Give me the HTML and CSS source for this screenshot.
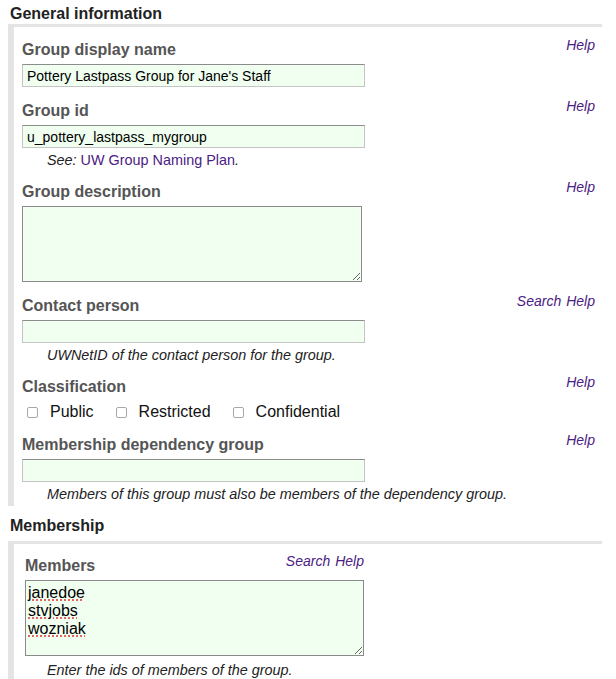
FILE: index.html
```html
<!DOCTYPE html>
<html lang="en">
<head>
<meta charset="utf-8">
<title>Group settings</title>
<link rel="stylesheet" href="styles.css">
</head>
<body>
<h2 class="section-title">General information</h2>
<div class="section">
  <div class="field">
    <div class="field-head"><span class="label">Group display name</span><span class="links"><a href="#">Help</a></span></div>
    <input class="text" type="text" value="Pottery Lastpass Group for Jane's Staff">
  </div>
  <div class="field">
    <div class="field-head"><span class="label">Group id</span><span class="links"><a href="#">Help</a></span></div>
    <input class="text" type="text" value="u_pottery_lastpass_mygroup">
    <div class="note">See: <a href="#">UW Group Naming Plan</a>.</div>
  </div>
  <div class="field">
    <div class="field-head"><span class="label">Group description</span><span class="links"><a href="#">Help</a></span></div>
    <textarea class="area desc"></textarea>
  </div>
  <div class="field">
    <div class="field-head"><span class="label">Contact person</span><span class="links"><a href="#">Search</a><a href="#">Help</a></span></div>
    <input class="text" type="text" value="">
    <div class="note">UWNetID of the contact person for the group.</div>
  </div>
  <div class="field">
    <div class="field-head"><span class="label">Classification</span><span class="links"><a href="#">Help</a></span></div>
    <div class="checks">
      <label class="check"><input type="checkbox"><span>Public</span></label>
      <label class="check"><input type="checkbox"><span>Restricted</span></label>
      <label class="check"><input type="checkbox"><span>Confidential</span></label>
    </div>
  </div>
  <div class="field last">
    <div class="field-head"><span class="label">Membership dependency group</span><span class="links"><a href="#">Help</a></span></div>
    <input class="text" type="text" value="">
    <div class="note">Members of this group must also be members of the dependency group.</div>
  </div>
</div>
<h2 class="section-title second">Membership</h2>
<div class="section membership">
  <div class="field members">
    <div class="field-head"><span class="label">Members</span><span class="links"><a href="#">Search</a><a href="#">Help</a></span></div>
    <textarea class="area mem" spellcheck="true">janedoe
stvjobs
wozniak</textarea>
    <div class="note">Enter the ids of members of the group.</div>
  </div>
</div>
</body>
</html>
```
FILE: styles.css
```css
html, body {
  background: #fff;
}
body {
  margin: 5px 8px 0 8px;
  font-family: "Liberation Sans", Arial, sans-serif;
  color: #222;
}
.section-title {
  margin: 0;
  padding-left: 2px;
  font-size: 16px;
  line-height: 18px;
  font-weight: bold;
  color: #222;
}
.section-title.second {
  margin-top: 11px;
}
.section {
  margin-top: 1px;
  margin-right: 6px;
  border-top: 3px solid #e4e4e4;
  border-left: 6px solid #e4e4e4;
  padding: 10px 7px 4px 8px;
}
.section.membership {
  margin-top: 6px;
  padding-top: 9px;
}
.field {
  display: flex;
  flex-direction: column;
  align-items: flex-start;
  margin-bottom: 11px;
}
.field.last {
  margin-bottom: 0;
}
.field-head {
  display: flex;
  justify-content: space-between;
  align-items: flex-start;
  align-self: stretch;
  margin-bottom: 5px;
}
.label {
  padding-top: 4px;
  font-size: 16px;
  line-height: 18px;
  font-weight: bold;
  color: #555;
}
.links {
  display: flex;
  gap: 5px;
  font-size: 14px;
  line-height: 16px;
  font-style: italic;
}
a {
  color: #4b2083;
  text-decoration: none;
}
.text {
  box-sizing: border-box;
  width: 343px;
  height: 23px;
  margin: 0;
  padding: 0 4px;
  background: #f0fff0;
  border: 1px solid #c4c4c4;
  border-top-color: #8c8c8c;
  font-family: "Liberation Sans", Arial, sans-serif;
  font-size: 14px;
  color: #000;
  outline: none;
}
.area {
  box-sizing: border-box;
  margin: 0;
  background: #f0fff0;
  border: 1px solid #8a8a8a;
  font-family: "Liberation Sans", Arial, sans-serif;
  color: #000;
  outline: none;
}
.area.desc {
  width: 340px;
  height: 76px;
}
.area.mem {
  width: 339px;
  height: 76px;
  padding: 3px 2px;
  font-size: 16px;
  line-height: 18px;
  text-decoration: underline dotted #e04040;
  text-underline-offset: 2px;
}
.note {
  margin-top: 5px;
  padding-left: 25px;
  font-size: 14.4px;
  line-height: 15px;
  font-style: italic;
  color: #222;
}
.note a {
  font-style: normal;
}
.checks {
  display: flex;
  align-items: center;
  margin-top: 1px;
  height: 19px;
}
.check {
  display: flex;
  align-items: center;
  margin-left: 5px;
  margin-right: 17px;
  font-size: 16px;
  line-height: 18px;
  color: #111;
}
.check input {
  appearance: none;
  -webkit-appearance: none;
  box-sizing: border-box;
  width: 11px;
  height: 11px;
  margin: 1px 12px 0 0;
  border: 1px solid #a8a8a8;
  border-radius: 2px;
  background: #fff;
}
.field.members {
  margin-left: 3px;
  width: 339px;
  margin-bottom: 0;
}
.field.members .note {
  margin-top: 7px;
  padding-left: 22px;
}
```
